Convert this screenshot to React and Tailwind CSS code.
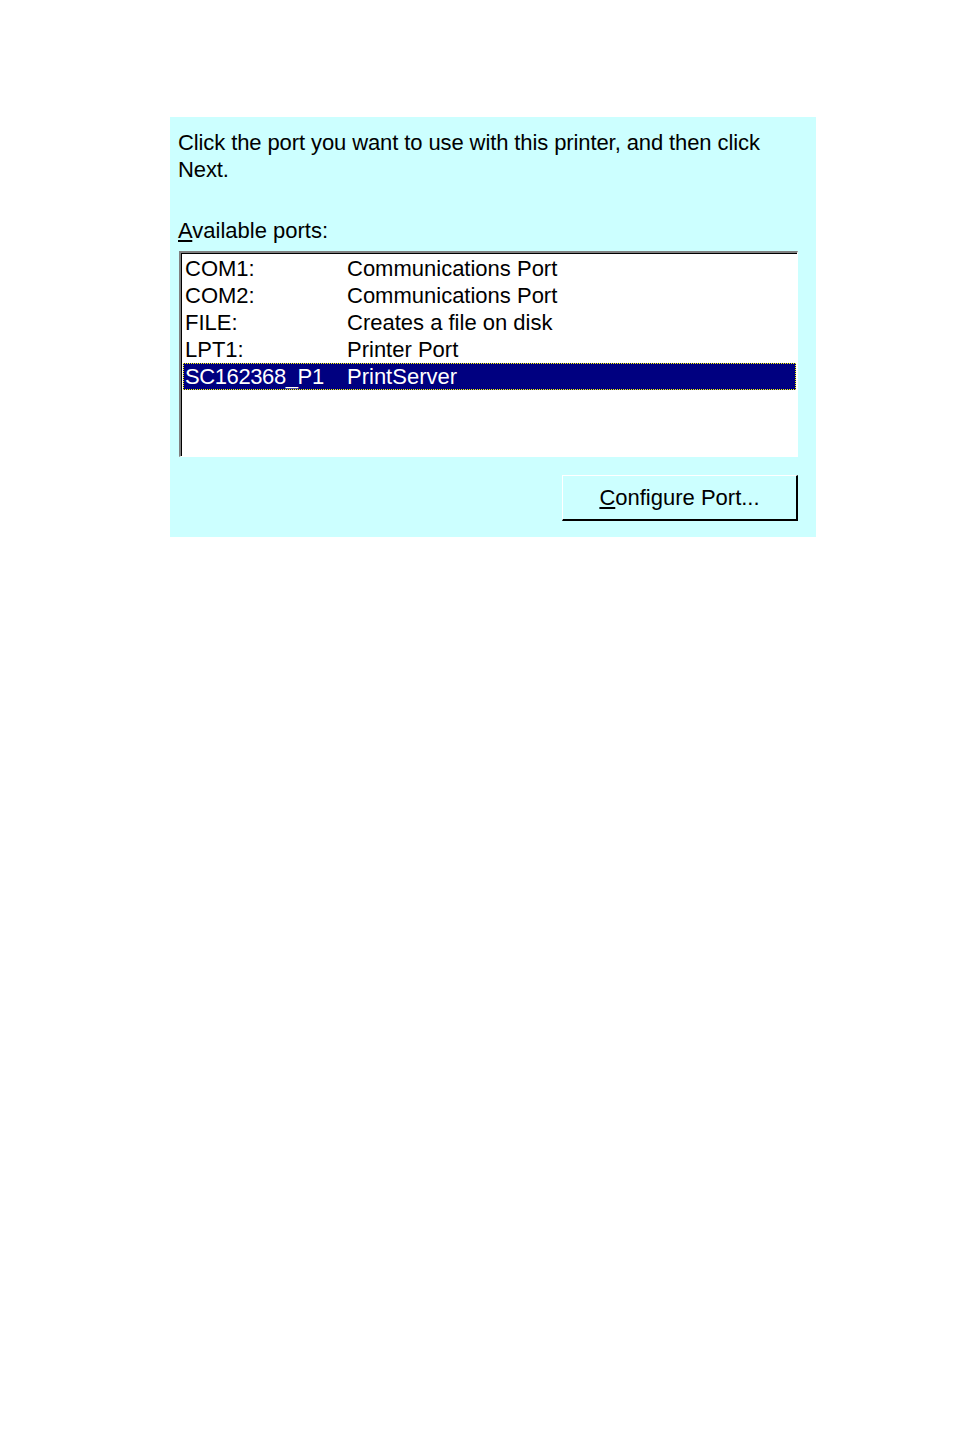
import React from 'react'

const ports = [
  { name: 'COM1:', desc: 'Communications Port' },
  { name: 'COM2:', desc: 'Communications Port' },
  { name: 'FILE:', desc: 'Creates a file on disk' },
  { name: 'LPT1:', desc: 'Printer Port' },
  { name: 'SC162368_P1', desc: 'PrintServer', selected: true },
]

export default function App() {
  return (
    <div className="min-h-[1431px] w-[954px] bg-white pt-[117px] pl-[170px] font-['Liberation_Sans',Arial,sans-serif] text-[22px] text-black">
      <div className="flex w-[646px] flex-col bg-[#ccffff] pt-[12px] pb-[16px] pl-[8px] pr-[18px]">
        <p className="leading-[27px] tracking-[-0.1px]">
          Click the port you want to use with this printer, and then click
          <br />
          Next.
        </p>
        <div className="mt-[34px] leading-[27px]">
          <span className="underline underline-offset-2">A</span>vailable ports:
        </div>
        <div className="mt-[7px] ml-[1px] h-[206px] border-t-2 border-l-2 border-t-[#808080] border-l-[#808080] border-r border-b border-r-white border-b-white">
          <div className="h-full border-t border-l border-black bg-white px-[1px] pt-[1px]">
            {ports.map((p) => (
              <div
                key={p.name}
                className={`flex h-[27px] items-center leading-[27px] ${
                  p.selected ? 'border border-dotted border-[#ffff00] bg-[#000080] text-white' : 'border border-transparent'
                }`}
              >
                <span className={`w-[163px] pl-[1px] ${p.selected ? 'tracking-[-0.4px]' : ''}`}>{p.name}</span>
                <span>{p.desc}</span>
              </div>
            ))}
          </div>
        </div>
        <div className="mt-[18px] flex justify-end">
          <button className="h-[46px] w-[236px] border-t border-l border-t-white border-l-white border-r-2 border-b-2 border-r-black border-b-black bg-[#ccffff]">
            <span className="underline underline-offset-2">C</span>onfigure Port...
          </button>
        </div>
      </div>
    </div>
  )
}
